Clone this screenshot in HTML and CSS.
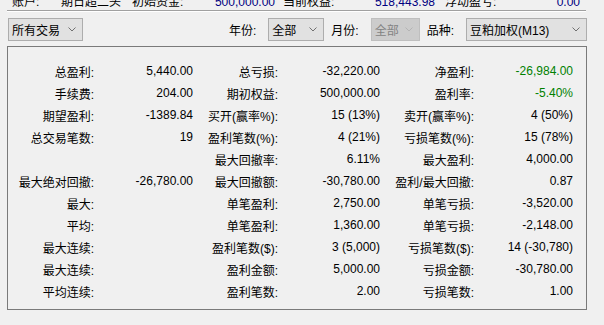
FILE: index.html
```html
<!DOCTYPE html>
<html>
<head>
    <title>交易统计</title>
    <link rel="stylesheet" href="styles.css">
</head>
<body>

<div class="info">
  <span class="cell w49">账户:</span>
  <span class="cell w71">期日超二头</span>
  <span class="cell w68">初始资金:</span>
  <span class="cell num">500,000.00</span>
  <span class="cell w85">当前权益:</span>
  <span class="cell num">518,443.98</span>
  <span class="cell w70">浮动盈亏:</span>
  <span class="cell num">0.00</span>
</div>
<div class="sep"></div>

<div class="toolbar">
  <div class="combo w75">
    <span>所有交易</span>
    <svg width="8" height="5" viewBox="0 0 8 5"><polyline points="0.5,0.5 4,4 7.5,0.5" fill="none" stroke="#707070"/></svg>
  </div>
  <span class="lbl first">年份:</span>
  <div class="combo w56">
    <span>全部</span>
    <svg width="8" height="5" viewBox="0 0 8 5"><polyline points="0.5,0.5 4,4 7.5,0.5" fill="none" stroke="#707070"/></svg>
  </div>
  <span class="lbl">月份:</span>
  <div class="combo disabled w49c">
    <span>全部</span>
    <svg width="8" height="5" viewBox="0 0 8 5"><polyline points="0.5,0.5 4,4 7.5,0.5" fill="none" stroke="#b4b4b4"/></svg>
  </div>
  <span class="lbl">品种:</span>
  <div class="combo w121">
    <span>豆粕加权(M13)</span>
    <svg width="8" height="5" viewBox="0 0 8 5"><polyline points="0.5,0.5 4,4 7.5,0.5" fill="none" stroke="#707070"/></svg>
  </div>
</div>

<div class="panel">
  <div class="stats">
    <span>总盈利:</span><span>5,440.00</span>
    <span>总亏损:</span><span>-32,220.00</span>
    <span>净盈利:</span><span class="green">-26,984.00</span>

    <span>手续费:</span><span>204.00</span>
    <span>期初权益:</span><span>500,000.00</span>
    <span>盈利率:</span><span class="green">-5.40%</span>

    <span>期望盈利:</span><span>-1389.84</span>
    <span>买开(赢率%):</span><span>15 (13%)</span>
    <span>卖开(赢率%):</span><span>4 (50%)</span>

    <span>总交易笔数:</span><span>19</span>
    <span>盈利笔数(%):</span><span>4 (21%)</span>
    <span>亏损笔数(%):</span><span>15 (78%)</span>

    <span></span><span></span>
    <span>最大回撤率:</span><span>6.11%</span>
    <span>最大盈利:</span><span>4,000.00</span>

    <span>最大绝对回撤:</span><span>-26,780.00</span>
    <span>最大回撤额:</span><span>-30,780.00</span>
    <span>盈利/最大回撤:</span><span>0.87</span>

    <span>最大:</span><span></span>
    <span>单笔盈利:</span><span>2,750.00</span>
    <span>单笔亏损:</span><span>-3,520.00</span>

    <span>平均:</span><span></span>
    <span>单笔盈利:</span><span>1,360.00</span>
    <span>单笔亏损:</span><span>-2,148.00</span>

    <span>最大连续:</span><span></span>
    <span>盈利笔数($):</span><span>3 (5,000)</span>
    <span>亏损笔数($):</span><span>14 (-30,780)</span>

    <span>最大连续:</span><span></span>
    <span>盈利金额:</span><span>5,000.00</span>
    <span>亏损金额:</span><span>-30,780.00</span>

    <span>平均连续:</span><span></span>
    <span>盈利笔数:</span><span>2.00</span>
    <span>亏损笔数:</span><span>1.00</span>
  </div>
</div>

</body>
</html>
```

FILE: styles.css
```css
body {
    margin: 0;
    padding: 0;
    background-color: #f0f0f0;
    color: #000;
    font-family: "Liberation Sans", "Noto Sans CJK SC", sans-serif;
    font-size: 12px;
    overflow: hidden;
}

/* account line, mostly scrolled out of view */
.info {
    display: flex;
    margin-top: -6px;
    padding-left: 12px;
    line-height: 16px;
    white-space: nowrap;
}

.cell.w49 { width: 49px; }
.cell.w71 { width: 71px; }
.cell.w68 { width: 68px; }
.cell.w85 { width: 77px; padding-left: 8px; }
.cell.w70 { width: 60px; padding-left: 10px; }

.cell.num {
    width: 75px;
    text-align: right;
    color: #000080;
}

.sep {
    margin: 0 18px 0 7px;
    height: 0;
    border-top: 1px solid #a0a0a0;
    border-bottom: 1px solid #ffffff;
}

.toolbar {
    display: flex;
    align-items: center;
    margin-top: 6px;
    padding: 0 17px 0 8px;
    height: 23px;
}

.combo {
    box-sizing: border-box;
    height: 23px;
    display: flex;
    align-items: center;
    justify-content: space-between;
    padding: 0 6px 0 3px;
    background-color: #e1e1e1;
    border: 1px solid #adadad;
    white-space: nowrap;
}

.combo svg {
    flex: none;
}

.combo.disabled {
    background-color: #cccccc;
    border-color: #bfbfbf;
    color: #838383;
}

.w75 { width: 75px; }
.w56 { width: 56px; }
.w49c { width: 49px; }
.w121 { width: 121px; }

.lbl {
    margin: 0 12px 0 7px;
    white-space: nowrap;
}

.lbl.first {
    margin-left: auto;
}

.panel {
    margin: 5px 17px 0 7px;
    border: 1px solid #7a7a7a;
    height: 262px;
    box-sizing: content-box;
}

.stats {
    display: grid;
    grid-template-columns: 86px 99px 85px 102px 94px 99px;
    grid-auto-rows: 22px;
    align-items: center;
    padding-top: 13px;
    white-space: nowrap;
}

.stats span {
    text-align: right;
}

.green {
    color: #008000;
}
```
